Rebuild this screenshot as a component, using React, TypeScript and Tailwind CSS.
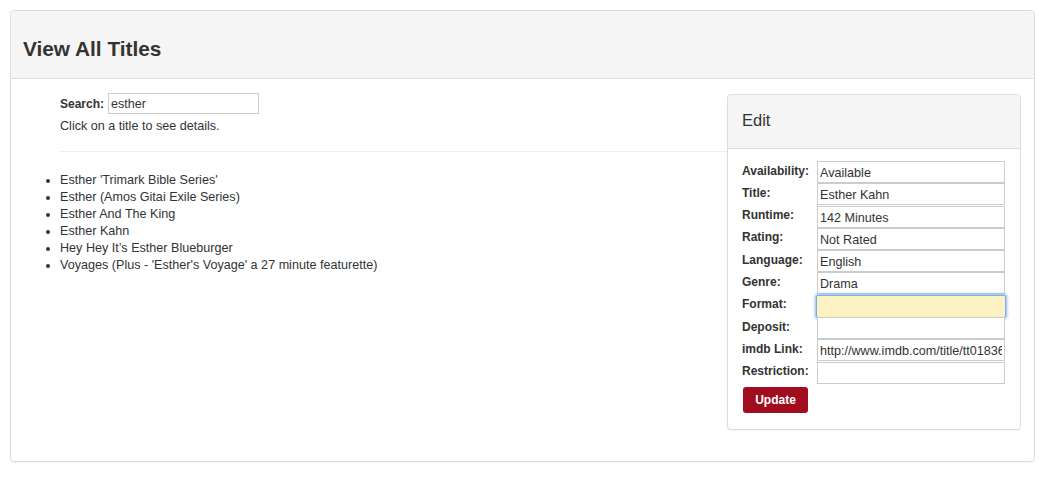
const titles = [
  "Esther 'Trimark Bible Series'",
  "Esther (Amos Gitai Exile Series)",
  "Esther And The King",
  "Esther Kahn",
  "Hey Hey It\u2019s Esther Blueburger",
  "Voyages (Plus - 'Esther's Voyage' a 27 minute featurette)",
]

const fields: { label: string; value: string; focused?: boolean }[] = [
  { label: "Availability:", value: "Available" },
  { label: "Title:", value: "Esther Kahn" },
  { label: "Runtime:", value: "142 Minutes" },
  { label: "Rating:", value: "Not Rated" },
  { label: "Language:", value: "English" },
  { label: "Genre:", value: "Drama" },
  { label: "Format:", value: "", focused: true },
  { label: "Deposit:", value: "" },
  { label: "imdb Link:", value: "http://www.imdb.com/title/tt0183649/" },
  { label: "Restriction:", value: "" },
]

function EditPanel() {
  return (
    <div className="w-[294px] shrink-0 rounded-[4px] border border-[#dddddd] bg-white shadow-[0_1px_1px_rgba(0,0,0,0.05)]">
      <div className="h-[54px] flex items-center px-[14px] bg-[#f5f5f5] border-b border-[#dddddd] rounded-t-[4px]">
        <h3 className="text-[16.5px] text-[#333333] -mt-[2px]">Edit</h3>
      </div>
      <div className="pt-[12px] pb-[16px] px-[14px]">
        <div className="flex flex-col">
          {fields.map((f) => (
            <div key={f.label} className="flex items-start h-[22.3px]">
              <label className="w-[75px] shrink-0 pt-[1.5px] font-bold text-[12px] leading-[17px] text-[#333333]">
                {f.label}
              </label>
              {f.focused ? (
                <input
                  readOnly
                  value={f.value}
                  className="w-[190px] h-[23px] -ml-[1px] px-[3px] text-[12.6px] text-[#333333] bg-[#fdf3c2] border border-[#7aaee8] rounded-[2px] shadow-[0_0_3px_1px_rgba(90,150,230,0.7)] outline-none"
                />
              ) : (
                <input
                  readOnly
                  value={f.value}
                  className="w-[188px] h-[22px] px-[2px] pt-[2px] text-[12.6px] text-[#333333] bg-white border border-[#cccccc] outline-none"
                />
              )}
            </div>
          ))}
        </div>
        <button className="mt-[3px] ml-[1px] w-[65px] h-[26px] rounded-[3px] bg-[#a10d1f] text-white font-bold text-[12px]">
          Update
        </button>
      </div>
    </div>
  )
}

export default function App() {
  return (
    <div
      className="bg-white min-h-[477px] pt-[10px] pl-[10px] w-[1048px] text-[#333333]"
      style={{ fontFamily: '"Liberation Sans", Arial, sans-serif' }}
    >
      <div className="w-[1025px] rounded-[4px] border border-[#dddddd] shadow-[0_1px_1px_rgba(0,0,0,0.05)]">
        <div className="h-[68px] flex items-center px-[12px] bg-[#f5f5f5] border-b border-[#dddddd] rounded-t-[4px]">
          <h1 className="text-[20.8px] font-bold text-[#333333] pt-[8px]">View All Titles</h1>
        </div>
        <div className="flex pt-[15px] pl-[15px] pr-[13px] pb-[31px]">
          <div className="flex-1">
            <div className="pl-[34px] -mt-[1px]">
              <div className="flex items-center h-[21px]">
                <span className="font-bold text-[12px] mr-[4px]">Search:</span>
                <input
                  readOnly
                  value="esther"
                  className="w-[151px] h-[21px] px-[2px] pt-[1px] text-[12.6px] text-[#333333] border border-[#cccccc] outline-none"
                />
              </div>
              <p className="text-[12.6px] leading-[17px] mt-[4px]">Click on a title to see details.</p>
              <hr className="mt-[16px] border-0 border-t border-[#eeeeee]" />
            </div>
            <ul className="list-disc pl-[34px] mt-[20px] text-[12.6px] leading-[17px]">
              {titles.map((t) => (
                <li key={t}>{t}</li>
              ))}
            </ul>
          </div>
          <EditPanel />
        </div>
      </div>
    </div>
  )
}
